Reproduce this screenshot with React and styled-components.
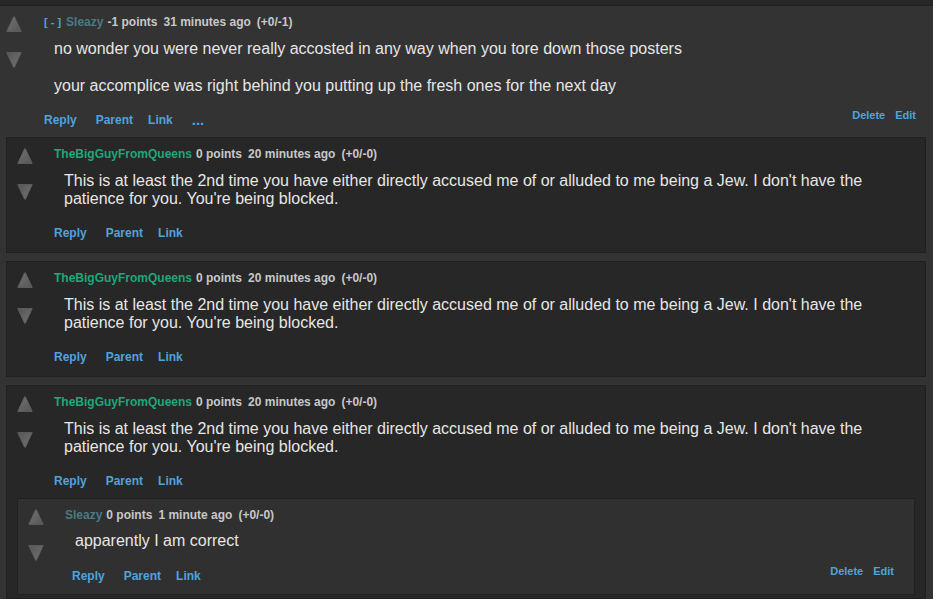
import React from "react";
import styled, { createGlobalStyle } from "styled-components";

const GlobalStyle = createGlobalStyle`
  body {
    margin: 0;
    background: #333333;
    color: #e6e6e6;
    font-family: "Liberation Sans", Arial, sans-serif;
    font-size: 16px;
    line-height: 18px;
  }
  p { margin: 0; }
`;

const Page = styled.main`
  min-height: 100vh;
`;

const PreviousEdge = styled.div`
  height: 5px;
  background: #272727;
  border-bottom: 1px solid #202020;
`;

const CommentRow = styled.article`
  display: grid;
  grid-template-columns: ${(p) => (p.$root ? 38 : 37)}px minmax(0, 1fr);
  padding: ${(p) => (p.$root ? "7px 17px 0 6px" : "7px 20px 0 10px")};
`;

const Votes = styled.div`
  display: flex;
  flex-direction: column;
  align-items: flex-start;
  gap: 20px;
  padding-top: 3px;
`;

const VoteButton = styled.button`
  width: 16px;
  height: 16px;
  padding: 0;
  border: 0;
  background: none;
  cursor: pointer;

  svg { display: block; }
`;

const Body = styled.div`
  min-width: 0;
`;

const Meta = styled.header`
  display: flex;
  gap: 4px;
  font-size: 12px;
  font-weight: bold;
  color: #c8c8c8;
`;

const Stats = styled.div`
  display: flex;
  gap: 6px;
`;

const TextLink = styled.a`
  color: #4fa3df;
  text-decoration: none;
`;

const Author = styled(TextLink)`
  color: ${(p) => (p.$own ? "#4b7a85" : "#1fa67a")};
`;

const Collapse = styled(TextLink)`
  margin-right: 1px;
  font-size: 11px;
`;

const Message = styled.div`
  display: flex;
  flex-direction: column;
  gap: 19px;
  padding: ${(p) => (p.$nested ? 8 : 9)}px 30px 0 10px;
`;

const Footer = styled.footer`
  display: flex;
  justify-content: space-between;
  padding: ${(p) => (p.$nested ? "17px 0 0 7px" : "16px 0 0")};
  font-size: 12px;
  font-weight: bold;
`;

const Actions = styled.nav`
  display: flex;
  gap: 15px;
`;

const ActionLink = styled(TextLink)`
  padding-right: ${(p) => (p.$spaced ? 4 : 0)}px;
`;

const MoreLink = styled(TextLink)`
  font-size: 15px;
`;

const OwnerActions = styled.nav`
  display: flex;
  gap: 10px;
  margin-top: -5px;
  font-size: 11px;
`;

const Replies = styled.section`
  display: flex;
  flex-direction: column;
  gap: 8px;
  padding: ${(p) => (p.$nested ? "8px 10px 0" : "8px 7px 0 6px")};
`;

const cardBottom = { plain: 10, thread: 3, answer: 9 };

const Card = styled.div`
  padding-bottom: ${(p) => cardBottom[p.$kind || "plain"]}px;
  background: ${(p) => (p.$kind === "answer" ? "#303030" : "#272727")};
  border: 1px solid #202020;
`;

function Arrow({ down }) {
  const id = down ? "fade-down" : "fade-up";
  return (
    <svg width="16" height="16" viewBox="0 0 16 16" aria-hidden="true">
      <defs>
        <linearGradient id={id} x1="0" y1="0" x2="1" y2="1">
          <stop offset="0" stopColor={down ? "#555555" : "#747474"} />
          <stop offset="1" stopColor={down ? "#747474" : "#555555"} />
        </linearGradient>
      </defs>
      <path
        d={down ? "M.8 .6H15.2L8.4 15.2H7.6Z" : "M7.6 .8H8.4L15.2 15.4H.8Z"}
        fill={`url(#${id})`}
        stroke="#5e5e5e"
        strokeLinejoin="round"
      />
    </svg>
  );
}

function Comment({ comment, root, nested, children }) {
  return (
    <>
      <CommentRow $root={root}>
        <Votes>
          <VoteButton type="button" aria-label="Upvote"><Arrow /></VoteButton>
          <VoteButton type="button" aria-label="Downvote"><Arrow down /></VoteButton>
        </Votes>
        <Body>
          <Meta>
            {root && <Collapse href="#">[ - ]</Collapse>}
            <Author href="#" $own={comment.own}>{comment.author}</Author>
            <Stats>
              <span>{comment.points}</span>
              <span>{comment.time}</span>
              <span>{comment.votes}</span>
            </Stats>
          </Meta>
          <Message $nested={nested}>
            {comment.text.map((line) => <p key={line}>{line}</p>)}
          </Message>
          <Footer $nested={nested}>
            <Actions>
              <ActionLink href="#" $spaced>Reply</ActionLink>
              <ActionLink href="#">Parent</ActionLink>
              <ActionLink href="#" $spaced>Link</ActionLink>
              {root && <MoreLink href="#">...</MoreLink>}
            </Actions>
            {comment.own && (
              <OwnerActions>
                <TextLink href="#">Delete</TextLink>
                <TextLink href="#">Edit</TextLink>
              </OwnerActions>
            )}
          </Footer>
        </Body>
      </CommentRow>
      {children}
    </>
  );
}

const parent = {
  author: "Sleazy",
  own: true,
  points: "-1 points",
  time: "31 minutes ago",
  votes: "(+0/-1)",
  text: [
    "no wonder you were never really accosted in any way when you tore down those posters",
    "your accomplice was right behind you putting up the fresh ones for the next day",
  ],
};

const reply = {
  author: "TheBigGuyFromQueens",
  points: "0 points",
  time: "20 minutes ago",
  votes: "(+0/-0)",
  text: [
    "This is at least the 2nd time you have either directly accused me of or alluded to me being a Jew. I don't have the patience for you. You're being blocked.",
  ],
};

const answer = {
  author: "Sleazy",
  own: true,
  points: "0 points",
  time: "1 minute ago",
  votes: "(+0/-0)",
  text: ["apparently I am correct"],
};

export default function App() {
  return (
    <Page>
      <GlobalStyle />
      <PreviousEdge />
      <Comment comment={parent} root />
      <Replies>
        <Card><Comment comment={reply} /></Card>
        <Card><Comment comment={reply} /></Card>
        <Card $kind="thread">
          <Comment comment={reply}>
            <Replies $nested>
              <Card $kind="answer"><Comment comment={answer} nested /></Card>
            </Replies>
          </Comment>
        </Card>
      </Replies>
    </Page>
  );
}
